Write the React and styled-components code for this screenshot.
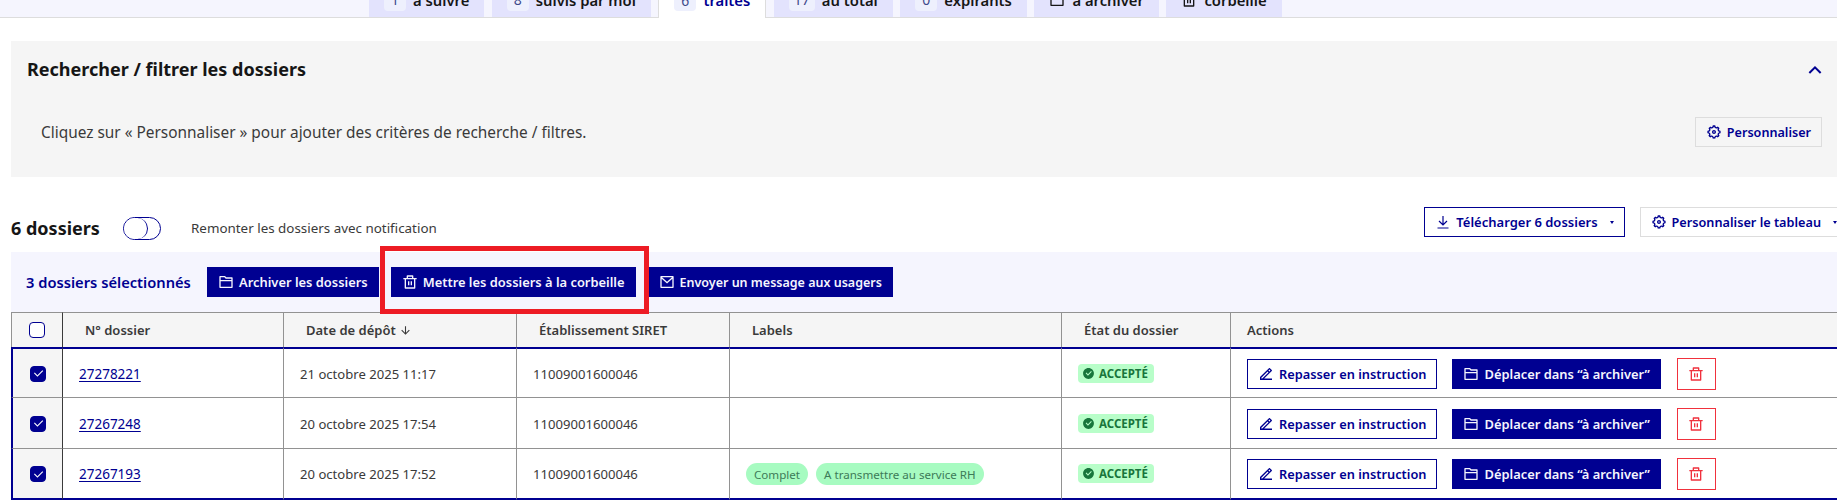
import React from "react";
import styled, { createGlobalStyle } from "styled-components";
import {
  RiFolder2Line,
  RiDeleteBinLine,
  RiMailLine,
  RiSettings5Line,
  RiEdit2Line,
  RiCheckboxCircleFill,
  RiArrowUpSLine,
  RiArrowDownLine,
  RiCheckLine,
} from "react-icons/ri";

const GlobalStyle = createGlobalStyle`
  * { box-sizing: border-box; }
  html, body {
    margin: 0;
    height: 500px;
    overflow: hidden;
    background: #fff;
    font-family: "Noto Sans", "Liberation Sans", sans-serif;
    color: #3a3a3a;
  }
`;

const Page = styled.div`
  width: 1860px;
`;

const TabBar = styled.div`
  margin-top: -18px;
  height: 36px;
  width: 1837px;
  background: #f5f5fe;
  border-bottom: 1px solid #ddd;
  display: flex;
  padding-left: 369px;
  gap: 7.5px;
`;

const Tab = styled.div`
  height: ${(p) => (p.$active ? "36px" : "35px")};
  padding: 0 15px;
  display: flex;
  align-items: center;
  gap: 7px;
  font-size: 14.8px;
  font-weight: 600;
  white-space: nowrap;
  color: ${(p) => (p.$active ? "#000091" : "#161616")};
  background: ${(p) => (p.$active ? "#fff" : "#e3e3fd")};
  border-left: ${(p) => (p.$active ? "1px solid #ddd" : "0")};
  border-right: ${(p) => (p.$active ? "1px solid #ddd" : "0")};
`;

const TabCount = styled.span`
  min-width: 22px;
  height: 22px;
  padding: 0 5px;
  border-radius: 4px;
  background: #eef0fd;
  color: #3f4a8a;
  font-size: 14px;
  font-weight: 400;
  display: flex;
  align-items: center;
  justify-content: center;
`;

const SearchPanel = styled.section`
  margin: 23px 0 0 11px;
  width: 1826px;
  height: 136px;
  background: #f5f5f5;
  padding: 16px 15px 0 16px;
`;

const PanelHead = styled.div`
  display: flex;
  justify-content: space-between;
  align-items: center;
  height: 24px;
  color: #161616;
  font-size: 18px;
  font-weight: 700;
  svg {
    color: #000091;
    margin: 2px -5px 0 0;
  }
`;

const PanelBody = styled.div`
  margin-top: 36px;
  padding-left: 14px;
  display: flex;
  justify-content: space-between;
  align-items: center;
  font-size: 15.4px;
  color: #3a3a3a;
`;

const Btn = styled.button`
  height: 30px;
  padding: 0 10px;
  display: inline-flex;
  align-items: center;
  gap: 5px;
  font: inherit;
  font-size: ${(p) => p.$size || 12.9}px;
  font-weight: 600;
  white-space: nowrap;
  border: 1px solid ${(p) => (p.$kind === "primary" || p.$kind === "outline" ? "#000091" : "#ddd")};
  background: ${(p) => (p.$kind === "primary" ? "#000091" : p.$kind === "outline" ? "#fff" : "transparent")};
  color: ${(p) => (p.$kind === "primary" ? "#f5f5fe" : "#000091")};
  svg {
    flex: none;
  }
`;

const TrashBtn = styled.button`
  width: 39px;
  height: 32px;
  padding: 0;
  display: flex;
  align-items: center;
  justify-content: center;
  background: #fff;
  border: 1px solid #f0313d;
  color: #f0313d;
`;

const Toolbar = styled.div`
  margin: 30px 0 0 11px;
  height: 32px;
  display: flex;
  align-items: flex-start;
`;

const ToolbarStart = styled.div`
  margin-top: 9px;
  display: flex;
  align-items: center;
`;

const Count = styled.h2`
  margin: 0;
  width: 112px;
  font-size: 18px;
  font-weight: 700;
  color: #161616;
`;

const Toggle = styled.span`
  width: 38px;
  height: 23px;
  border: 1px solid #000091;
  border-radius: 12px;
  display: block;
  &::before {
    content: "";
    display: block;
    width: 23px;
    height: 21px;
    border-right: 1px solid #000091;
    border-radius: 12px;
    background: #fff;
  }
`;

const ToggleLabel = styled.span`
  margin-left: 30px;
  font-size: 13.4px;
  color: #3a3a3a;
`;

const ToolbarEnd = styled.div`
  margin-left: auto;
  display: flex;
  gap: 15px;
  padding-right: 12px;
`;

const Caret = styled.span`
  width: 0;
  height: 0;
  margin-left: 7px;
  border-left: 2.5px solid transparent;
  border-right: 2.5px solid transparent;
  border-top: 3px solid currentColor;
`;

const SelectionBar = styled.div`
  position: relative;
  margin: 13px 0 0 11px;
  width: 1826px;
  height: 60px;
  background: #f5f5fe;
  padding-left: 15px;
  display: flex;
  align-items: center;
  gap: 12px;
`;

const SelectionCount = styled.span`
  width: 181px;
  margin-right: -12px;
  font-size: 14.7px;
  font-weight: 600;
  color: #000091;
`;

// annotation drawn over the screenshot
const RedBox = styled.div`
  position: absolute;
  left: 369px;
  top: -6px;
  width: 269px;
  height: 68px;
  border: 5px solid #ed1c24;
  pointer-events: none;
`;

const Table = styled.table`
  margin-left: 11px;
  width: 1849px;
  table-layout: fixed;
  border-collapse: separate;
  border-spacing: 0;
  font-size: 13.1px;
`;

const Th = styled.th`
  height: 35px;
  padding: 0 0 0 ${(p) => (p.$tight ? 16 : 22)}px;
  text-align: left;
  font-size: 13px;
  font-weight: 600;
  color: #3a3a3a;
  background: #f5f5f5;
  border-top: 1px solid #929292;
  border-right: 1px solid #929292;
  &:first-child {
    padding: 0;
    border-left: 1px solid #929292;
    border-right-color: #3a3a3a;
  }
  svg {
    vertical-align: -2px;
  }
`;

const Td = styled.td`
  height: 51px;
  padding: 1px 0 0 16px;
  white-space: nowrap;
  color: #3a3a3a;
  border-right: 1px solid #929292;
  border-bottom: ${(p) => (p.$last ? "2px solid #000091" : p.$plain ? "0" : "1px solid #929292")};
  border-top: ${(p) => (p.$first ? "2px solid #000091" : "0")};
  &:first-child {
    padding: 1px 0 0;
    background: ${(p) => (p.$plain ? "#fff" : "#f5f5f5")};
    border-left: 2px solid ${(p) => (p.$plain ? "#929292" : "#000091")};
    border-right-color: #3a3a3a;
  }
`;

const Box = styled.span`
  width: 16px;
  height: 16px;
  margin-left: 17px;
  border-radius: 4px;
  display: flex;
  align-items: center;
  justify-content: center;
  border: 1px solid #000091;
  background: ${(p) => (p.$on ? "#000091" : "#fff")};
  color: #fff;
`;

const DossierLink = styled.a`
  color: #000091;
  font-size: 13.5px;
  text-decoration: underline;
  text-underline-offset: 2px;
`;

const Status = styled.span`
  display: inline-flex;
  align-items: center;
  gap: 4px;
  height: 19px;
  padding: 0 6px 0 4px;
  border-radius: 4px;
  background: #b8fec9;
  color: #18753c;
  font-size: 11.5px;
  font-weight: 700;
`;

const Chips = styled.div`
  display: flex;
  gap: 8px;
`;

const Chip = styled.span`
  height: 22px;
  padding: 0 8px;
  border-radius: 11px;
  background: #a7fbc1;
  color: #3d7a58;
  font-size: 11.6px;
  display: flex;
  align-items: center;
`;

const Actions = styled.div`
  display: flex;
  align-items: center;
`;

const ActionGap = styled.span`
  width: ${(p) => p.$w}px;
  flex: none;
`;

const rows = [
  { id: "27278221", date: "21 octobre 2025 11:17", labels: [] },
  { id: "27267248", date: "20 octobre 2025 17:54", labels: [] },
  { id: "27267193", date: "20 octobre 2025 17:52", labels: ["Complet", "A transmettre au service RH"] },
];

const tabs = [
  { count: 1, label: "à suivre" },
  { count: 8, label: "suivis par moi" },
  { count: 6, label: "traités", active: true },
  { count: 17, label: "au total" },
  { count: 0, label: "expirants" },
  { icon: <RiFolder2Line size={16} />, label: "à archiver" },
  { icon: <RiDeleteBinLine size={16} />, label: "corbeille" },
];

const DownloadIcon = () => (
  <svg width="16" height="16" viewBox="0 0 16 16" fill="none" stroke="currentColor" strokeWidth="1.2">
    <path d="M8 2v8.5M4 7l4 4 4-4M2.5 14h11" />
  </svg>
);

const App = () => {
  return (
    <Page>
      <GlobalStyle />
      <TabBar>
        {tabs.map((t) => (
          <Tab key={t.label} $active={t.active}>
            {t.icon || <TabCount>{t.count}</TabCount>}
            {t.label}
          </Tab>
        ))}
      </TabBar>

      <SearchPanel>
        <PanelHead>
          Rechercher / filtrer les dossiers
          <RiArrowUpSLine size={24} />
        </PanelHead>
        <PanelBody>
          Cliquez sur « Personnaliser » pour ajouter des critères de recherche / filtres.
          <Btn $size={12.6}>
            <RiSettings5Line size={16} />
            Personnaliser
          </Btn>
        </PanelBody>
      </SearchPanel>

      <Toolbar>
        <ToolbarStart>
          <Count>6 dossiers</Count>
          <Toggle />
          <ToggleLabel>Remonter les dossiers avec notification</ToggleLabel>
        </ToolbarStart>
        <ToolbarEnd>
          <Btn $kind="outline" $size={13}>
            <DownloadIcon />
            Télécharger 6 dossiers
            <Caret />
          </Btn>
          <Btn $size={12.7}>
            <RiSettings5Line size={16} />
            Personnaliser le tableau
            <Caret />
          </Btn>
        </ToolbarEnd>
      </Toolbar>

      <SelectionBar>
        <SelectionCount>3 dossiers sélectionnés</SelectionCount>
        <Btn $kind="primary">
          <RiFolder2Line size={16} />
          Archiver les dossiers
        </Btn>
        <Btn $kind="primary">
          <RiDeleteBinLine size={16} />
          Mettre les dossiers à la corbeille
        </Btn>
        <Btn $kind="primary" $size={12.5}>
          <RiMailLine size={16} />
          Envoyer un message aux usagers
        </Btn>
        <RedBox />
      </SelectionBar>

      <Table>
        <colgroup>
          <col style={{ width: 52 }} />
          <col style={{ width: 221 }} />
          <col style={{ width: 233 }} />
          <col style={{ width: 213 }} />
          <col style={{ width: 332 }} />
          <col style={{ width: 169 }} />
          <col />
        </colgroup>
        <thead>
          <tr>
            <Th>
              <Box />
            </Th>
            <Th>N° dossier</Th>
            <Th>
              Date de dépôt <RiArrowDownLine size={13} />
            </Th>
            <Th>Établissement SIRET</Th>
            <Th>Labels</Th>
            <Th>État du dossier</Th>
            <Th $tight>Actions</Th>
          </tr>
        </thead>
        <tbody>
          {rows.map((r, i) => {
            const edge = { $first: i === 0, $last: i === rows.length - 1 };
            return (
              <tr key={r.id}>
                <Td {...edge}>
                  <Box $on>
                    <RiCheckLine size={13} />
                  </Box>
                </Td>
                <Td {...edge}>
                  <DossierLink href="#">{r.id}</DossierLink>
                </Td>
                <Td {...edge}>{r.date}</Td>
                <Td {...edge}>11009001600046</Td>
                <Td {...edge}>
                  <Chips>
                    {r.labels.map((l) => (
                      <Chip key={l}>{l}</Chip>
                    ))}
                  </Chips>
                </Td>
                <Td {...edge}>
                  <Status>
                    <RiCheckboxCircleFill size={13} />
                    ACCEPTÉ
                  </Status>
                </Td>
                <Td {...edge}>
                  <Actions>
                    <Btn $kind="outline" $size={12.8}>
                      <RiEdit2Line size={16} />
                      Repasser en instruction
                    </Btn>
                    <ActionGap $w={15} />
                    <Btn $kind="primary">
                      <RiFolder2Line size={16} />
                      Déplacer dans “à archiver”
                    </Btn>
                    <ActionGap $w={16} />
                    <TrashBtn>
                      <RiDeleteBinLine size={16} />
                    </TrashBtn>
                  </Actions>
                </Td>
              </tr>
            );
          })}
          <tr>
            {[0, 1, 2, 3, 4, 5, 6].map((n) => (
              <Td key={n} $plain />
            ))}
          </tr>
        </tbody>
      </Table>
    </Page>
  );
};

export default App;
